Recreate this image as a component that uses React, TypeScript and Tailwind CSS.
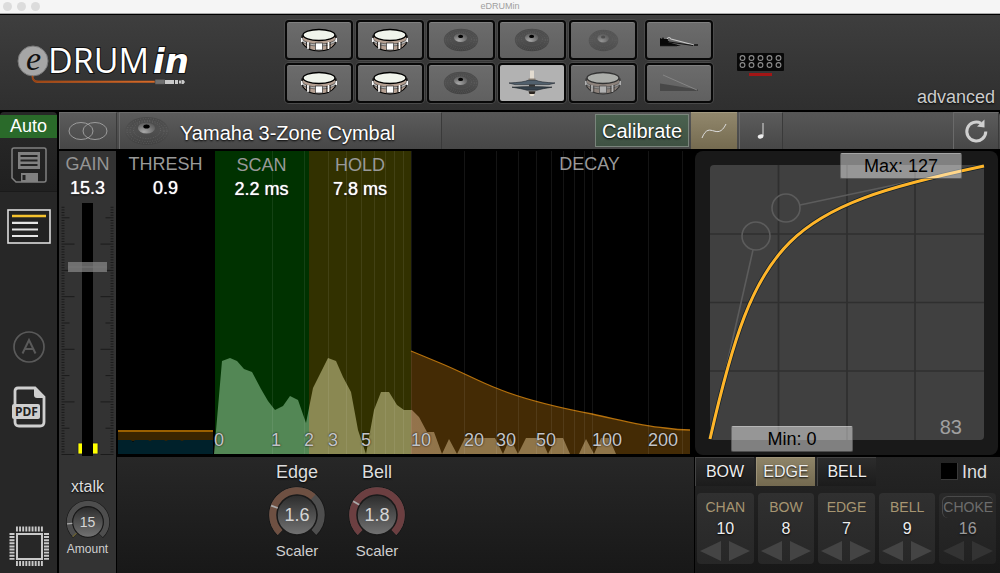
import React, { useId, useState } from "react";

const glow = "[text-shadow:0_1px_2px_#000]";
const valueText = "text-lg leading-6 text-white [text-shadow:0_0_1px_#fff,0_1px_2px_#000]";

function Snare({ dim = false }: { dim?: boolean }) {
  return (
    <svg viewBox="0 0 38 24" className={dim ? "h-6 w-[38px] opacity-50" : "h-6 w-[38px]"} aria-hidden="true">
      <path d="M2 8 L3 16 Q8 23 19 23 Q30 23 35 16 L36 8Z" fill="#b5a092" stroke="#000" strokeWidth="1.2" />
      <path d="M1.5 10.500Q6 16 19 16Q32 16 36.500 10.500L36.500 13Q32 18 19 18Q6 18 1.500 13Z" fill="#bbb" stroke="#222" strokeWidth=".5" />
      <ellipse cx="19" cy="7" rx="16" ry="5.5" fill="#f0f4ec" stroke="#000" strokeWidth="1.4" />
      <rect x="15.500" y="15" width="7" height="7" fill="#fff" stroke="#333" strokeWidth=".7" />
      <path d="M8 14v7M28.500 14v7M1.800 10v4M36.200 10v4" stroke="#fff" strokeWidth="1.500" />
      <path d="M6.500 14v6M9.800 15v6M26.800 15v6M30.200 14v6" stroke="#111" strokeWidth=".8" />
    </svg>
  );
}

function Cymbal({ size = "md", hole = true }: { size?: "sm" | "md" | "lg"; hole?: boolean }) {
  const id = useId();
  const cls =
    size === "lg" ? "h-[30px] w-[46px]" : size === "sm" ? "h-[23px] w-[31px] opacity-70" : "h-6 w-[36px]";
  return (
    <svg viewBox="0 0 46 30" preserveAspectRatio="none" className={cls} aria-hidden="true">
      <defs>
        <linearGradient id={id} x1="0" y1="0" x2="0" y2="1">
          <stop offset="0" stopColor="#4a4a4a" />
          <stop offset=".5" stopColor="#505050" />
          <stop offset="1" stopColor="#424242" />
        </linearGradient>
        <radialGradient id={id + "b"} cx=".35" cy=".85" r=".9">
          <stop offset="0" stopColor="#a8a8a8" />
          <stop offset=".6" stopColor="#727272" />
          <stop offset="1" stopColor="#555" />
        </radialGradient>
      </defs>
      <ellipse cx="23" cy="15" rx="22" ry="14" fill={`url(#${id})`} />
      <g fill="none" stroke="#bbb" strokeOpacity=".18" strokeDasharray="1 1.6">
        <ellipse cx="23" cy="15" rx="20" ry="12.500" />
        <ellipse cx="23" cy="15" rx="17" ry="10.500" />
        <ellipse cx="23" cy="14" rx="13.500" ry="8.500" />
      </g>
      <ellipse cx="22.500" cy="12" rx="8.500" ry="5.500" fill={`url(#${id}b)`} />
      <ellipse cx="22.500" cy="10.500" rx="3.200" ry="2" fill={hole ? "#000" : "#444"} />
    </svg>
  );
}

function HiHat() {
  return (
    <svg viewBox="0 0 48 28" className="h-7 w-12" aria-hidden="true">
      <path d="M22 1.500h4v9h-4z" fill="#e2dbd0" />
      <path d="M20.500 9.500h7v2h-7z" fill="#8a7f74" />
      <path d="M1 14Q16 13.300 20 11.300h8Q32 13.300 47 14L41 15.600H7Z" fill="#51606d" stroke="#1c242b" strokeWidth=".6" />
      <path d="M4 18.200Q14 17.600 24 17.600T44 18.200Q34 19.700 29 21.200H19Q14 19.700 4 18.200Z" fill="#36424c" stroke="#161c22" strokeWidth=".6" />
      <path d="M21 15.600h6v2h-6z" fill="#333" />
      <path d="M20.500 22.300h7l-1 2.700h-5z" fill="#2a241f" />
      <path d="M21.500 25h5l-1 2h-3z" fill="#e8dfd0" />
    </svg>
  );
}

function Pedal({ dim = false }: { dim?: boolean }) {
  return dim ? (
    <svg viewBox="0 0 40 18" className="h-[18px] w-10" aria-hidden="true">
      <path d="M1 9.500L39 15.500V17H1Z" fill="#484848" />
      <path d="M4 1L38 16" stroke="#888" strokeWidth=".9" />
    </svg>
  ) : (
    <svg viewBox="0 0 40 12" className="mt-1 h-3 w-10" aria-hidden="true">
      <path d="M1 2l2 1 1-2 1 2h4v3L22 10H1z" fill="#080808" />
      <path d="M1 9.500h17M33 9h6" stroke="#111" strokeWidth="1.500" />
      <path d="M8 3q2-3 4 0L35 9" fill="none" stroke="#c9c9c9" strokeWidth="1.200" />
      <path d="M8 4l2 2L34 9.500" fill="none" stroke="#111" />
    </svg>
  );
}

function Pad({ label, active, children }: { label: string; active?: boolean; children: React.ReactNode }) {
  return (
    <button
      type="button"
      aria-label={label}
      className={
        "flex h-10 w-[68px] items-center justify-center rounded border-2 border-[#080808] shadow-[0_0_0_1px_#4a4a4a] " +
        (active ? "bg-[#b2b2b2]" : "bg-linear-to-b from-[#6c6c6c] to-[#606060] inset-shadow-[0_1px_0_#808080]")
      }
    >
      {children}
    </button>
  );
}

function Logo() {
  return (
    <svg viewBox="0 -14 190 60" className="h-[60px] w-[190px]" role="img" aria-label="eDRUMin">
      <defs>
        <linearGradient id="cable" x1="0" x2="1" y1="0" y2="0">
          <stop offset="0" stopColor="#8f3a0c" />
          <stop offset="1" stopColor="#e27430" />
        </linearGradient>
      </defs>
      <circle cx="16" cy="16" r="15" fill="#a6a6a6" stroke="#777" />
      <text x="9" y="25" fontSize="34" fontStyle="italic" fill="#111" fontFamily="'Liberation Serif', serif">e</text>
      <text x="31" y="28" fontSize="34" fill="#fff" stroke="#111" strokeWidth="2" paintOrder="stroke" fontFamily="'Open Sans', sans-serif">DRUM</text>
      <text x="136" y="28" fontSize="34" fontWeight="700" fontStyle="italic" fill="#fff" stroke="#111" strokeWidth="2" paintOrder="stroke" fontFamily="'DejaVu Sans', sans-serif">in</text>
      <path d="M16 31Q16 36 21 36H138V37.500H20Q15 37 15 31Z" fill="url(#cable)" stroke="#c05a20" strokeWidth=".6" />
      <path d="M138 34.300h10v5h-10z" fill="#707070" stroke="#333" strokeWidth=".5" />
      <path d="M148 35h9v4h-9zM158 35h3v4h-3zM162 35.500h2v3h-2zM164.500 35h2l1.500 2-1.500 2h-2z" fill="#c9c9c9" />
    </svg>
  );
}

function arc(r: number, from: number, to: number) {
  const p = (a: number) => {
    const t = (a * Math.PI) / 180;
    return `${(30 + r * Math.sin(t)).toFixed(2)} ${(30 - r * Math.cos(t)).toFixed(2)}`;
  };
  return `M${p(from)}A${r} ${r} 0 ${to - from > 180 ? 1 : 0} 1 ${p(to)}`;
}

type KnobProps = { id: string; label: string; shown: string; color: string; from: number; to: number; mark: number; small?: boolean };

function Knob({ id, label, shown, color, from, to, mark, small }: KnobProps) {
  const rad = (mark * Math.PI) / 180;
  return (
    <div className="flex flex-col items-center">
      <div className={small ? "relative h-[46px] w-[46px]" : "relative h-[60px] w-[60px]"}>
        <svg viewBox="0 0 60 60" className="block h-full w-full" aria-hidden="true">
          <defs>
            <linearGradient id={id + "-face"} x1="0" x2="0" y1="0" y2="1">
              <stop offset="0" stopColor="#2c2c2c" />
              <stop offset="1" stopColor="#737373" />
            </linearGradient>
          </defs>
          <path d={arc(24, -137, 137)} fill="none" stroke="#161616" strokeWidth="9" />
          <path d={arc(24, -136, 136)} fill="none" stroke="#4e4e4e" strokeWidth="7.500" />
          <path d={arc(24, from, to)} fill="none" stroke={color} strokeWidth="7.500" />
          <circle cx="30" cy="30" r="20" fill={`url(#${id}-face)`} stroke="#1a1a1a" strokeWidth="1.500" />
          <line
            x1={30 + 20.5 * Math.sin(rad)} y1={30 - 20.5 * Math.cos(rad)}
            x2={30 + 27.5 * Math.sin(rad)} y2={30 - 27.5 * Math.cos(rad)}
            stroke="#aaa" strokeWidth="1.800"
          />
        </svg>
        <span className={"pointer-events-none absolute inset-0 flex items-center justify-center text-[#d6d6d6] " + (small ? "text-sm" : "text-lg")}>
          {shown}
        </span>
        <input id={id} type="range" min="0" max="20" step="0.1" defaultValue={shown} className="absolute inset-0 h-full w-full cursor-pointer opacity-0" />
      </div>
      <label htmlFor={id} className={small ? "-mt-1 text-xs leading-4 text-[#cfcfcf]" : "-mt-1 text-[15px] leading-5 text-[#cfcfcf]"}>
        {label}
      </label>
    </div>
  );
}

function Sidebar() {
  return (
    <nav className="flex w-[57px] shrink-0 flex-col items-center rounded-t bg-[#272727] pt-[3px]" aria-label="Tools">
      <button type="button" className="h-[23px] w-full bg-[#2a6a2a] text-lg leading-[23px] text-white">Auto</button>
      <button type="button" aria-label="Save" className="flex h-[54px] w-full items-center justify-center border-b border-[#1a1a1a] bg-linear-to-b from-[#262626] to-[#202020]">
        <svg viewBox="0 0 36 36" className="h-9 w-9" aria-hidden="true">
          <path d="M3 1H33Q35 1 35 3V33Q35 35 33 35H5L1 31V3Q1 1 3 1Z" fill="none" stroke="#808080" strokeWidth="1.500" />
          <path d="M7 5h22v17H7z" fill="#808080" />
          <path d="M9.500 9h17M9.500 13.500h17M9.500 18h17" stroke="#222" strokeWidth="2" />
          <path d="M10 26h17v9H10z" fill="#808080" />
          <path d="M11.500 28h3v5h-3z" fill="#222" />
        </svg>
      </button>
      <button type="button" aria-label="Parameters" className="mt-[17px]">
        <svg viewBox="0 0 44 35" className="block h-[35px] w-11" aria-hidden="true">
          <rect x="1" y="1" width="42" height="33" fill="#222" stroke="#ddd" strokeWidth="1.600" />
          <path d="M5 7h34" stroke="#f5c22e" strokeWidth="2.500" />
          <path d="M5 13.800h26M5 20.500h26M5 27h26" stroke="#e4e4e4" strokeWidth="2.200" />
        </svg>
      </button>
      <button type="button" aria-label="About" className="mt-[86px]">
        <svg viewBox="0 0 34 34" className="block h-[34px] w-[34px]" aria-hidden="true" fill="none" stroke="#5a5a5a">
          <circle cx="17" cy="17" r="15" strokeWidth="1.700" />
          <path d="M10.500 23.500L17 10l6.500 13.500M13 19h8" strokeWidth="2" />
        </svg>
      </button>
      <button type="button" aria-label="Open manual" className="mt-[22px]">
        <svg viewBox="0 0 34 42" className="block h-[42px] w-[34px]" aria-hidden="true">
          <path d="M3 20V5Q3 2 6 2H23L32 11V36Q32 40 28 40H7Q3 40 3 36V31" fill="none" stroke="#cfcfcf" strokeWidth="2.800" />
          <path d="M22 2v7q0 3 3 3h7z" fill="#cfcfcf" />
          <rect x="0" y="18" width="28" height="15" rx="2" fill="#cfcfcf" />
          <text x="3" y="30" fontSize="12" fontWeight="700" fill="#222" fontFamily="'Noto Sans', sans-serif">PDF</text>
        </svg>
      </button>
      <button type="button" aria-label="Firmware" className="mt-auto mb-1.5">
        <svg viewBox="0 0 42 42" className="block h-[42px] w-[42px]" aria-hidden="true" fill="none" stroke="#c9c9c9">
          <rect x="9" y="9" width="25" height="25" strokeWidth="2" />
          <path d="M8 4H35M8 38.500H35" strokeWidth="5" strokeDasharray="1.900 1.220" />
          <path d="M4 8V35M38.500 8V35" strokeWidth="5" strokeDasharray="1.900 1.220" />
        </svg>
      </button>
    </nav>
  );
}

const barBtn =
  "flex items-center justify-center border-t border-l border-t-[#6c6c6c] border-l-[#6a6a6a] border-r border-r-[#3a3a3a] bg-linear-to-b from-[#5c5c5c] to-[#474747] ";

function Toolbar() {
  return (
    <div className="flex h-[37px] shrink-0 items-stretch rounded-t bg-linear-to-b from-[#575757] to-[#474747]">
      <button type="button" aria-label="Link inputs" className={barBtn + "w-[58px]"}>
        <svg viewBox="0 0 40 20" className="h-5 w-10" fill="none" stroke="#9c9c9c" aria-hidden="true">
          <ellipse cx="13" cy="10" rx="12" ry="8.500" />
          <ellipse cx="27" cy="10" rx="12" ry="8.500" />
        </svg>
      </button>
      <button type="button" className={barBtn + "ml-0.5 w-[323px] justify-start! pl-1 text-xl text-white " + glow}>
        <Cymbal size="lg" />
        <span className="pt-1 pl-2.5 whitespace-nowrap">Yamaha 3-Zone Cymbal</span>
      </button>
      <button type="button" className={"my-0.5 ml-auto w-[94px] border border-[#7a857c] bg-linear-to-b from-[#4b6250] to-[#3f5243] text-xl leading-none text-white " + glow}>
        Calibrate
      </button>
      <button type="button" aria-label="Velocity curve" className="ml-0.5 flex w-[46px] items-center justify-center border-t border-[#a39a80] bg-linear-to-b from-[#91876c] to-[#756b50]">
        <svg viewBox="0 0 28 18" className="h-[18px] w-7" fill="none" stroke="#ddd" aria-hidden="true">
          <path d="M2 16C6 6 10 8 14 9C20 11 23 8 26 2" />
        </svg>
      </button>
      <button type="button" aria-label="Notes" className={barBtn + "ml-0.5 w-[44px]"}>
        <svg viewBox="0 0 10 18" className="h-[18px] w-2.5" aria-hidden="true">
          <path d="M7 1v13" stroke="#ddd" />
          <ellipse cx="4.600" cy="14.500" rx="2.900" ry="2" fill="#eee" transform="rotate(-15 4.600 14.500)" />
        </svg>
      </button>
      <button type="button" aria-label="Reset" className={barBtn + "mr-px ml-[170px] w-[46px]"}>
        <svg viewBox="0 0 26 26" className="h-[26px] w-[26px]" aria-hidden="true">
          <path d="M18 5.200A9.500 9.500 0 1 0 22.800 13.500" fill="none" stroke="#d0d0d0" strokeWidth="3" />
          <path d="M14 8.500L21.500 9.500V1.500Z" fill="#d0d0d0" />
        </svg>
      </button>
    </div>
  );
}

function GainStrip() {
  const ticks: { y: number; len: number }[] = [];
  for (let i = 0; i <= 94; i++) {
    ticks.push({ y: 251.5 - i * 2.63, len: i % 20 === 0 ? 13 : i % 10 === 0 ? 8 : 3 });
  }
  return (
    <section className="flex w-[57px] shrink-0 flex-col items-center bg-[#333] text-center">
      <label htmlFor="gain" className="pt-px text-lg leading-6 text-[#949494]">GAIN</label>
      <output htmlFor="gain" className={valueText}>15.3</output>
      <div className="relative mt-[3px] min-h-[240px] w-full flex-1">
        <svg viewBox="0 0 57 253" preserveAspectRatio="none" className="absolute inset-0 h-full w-full" aria-hidden="true">
          {ticks.map((t) => (
            <path key={t.y} d={`M2.500 ${t.y}h${t.len}M54.500 ${t.y}h-${t.len}`} stroke="#1b1b1b" />
          ))}
          <rect x="19" y="240" width="20" height="11" fill="#ff0" stroke="#223" strokeWidth=".8" />
          <rect x="23" y="0" width="11" height="253" fill="#000" />
          <rect x="9" y="59" width="39" height="10" fill="#888" fillOpacity=".72" />
          <path d="M9 64h39" stroke="#777" />
        </svg>
        <input id="gain" type="range" min="0" max="24" step="0.1" defaultValue="15.3" className="absolute inset-0 h-full w-full opacity-0 [writing-mode:vertical-lr] [direction:rtl]" />
      </div>
      <h2 className={"mt-[19px] text-base leading-6 text-[#ddd] " + glow}>xtalk</h2>
      <Knob id="xtalk-amount" label="Amount" shown="15" color="#6a6030" from={-136} to={-132} mark={-95} small />
      <div className="h-4" />
    </section>
  );
}

const gridX = [272, 304, 328, 346, 361, 374, 385, 394, 403, 411, 464, 496, 518, 536, 551, 563, 574, 584, 592, 648, 682];

const chartLeft = 117;
const chartWidth = 573;

const axis = [
  { t: "0", x: 214 },
  { t: "1", x: 271 },
  { t: "2", x: 304 },
  { t: "3", x: 328 },
  { t: "5", x: 361 },
  { t: "10", x: 411 },
  { t: "20", x: 464 },
  { t: "30", x: 496 },
  { t: "50", x: 536 },
  { t: "100", x: 592 },
  { t: "200", x: 648 },
];

const wave =
  "214,454 222,361 230,358 237,361 244,369 252,372 261,389 268,401 275,410 283,406 290,396 298,400 306,423 313,388 321,372 328,358 336,361 343,377 351,392 358,430 366,454 374,410 381,392 389,392 397,405 404,410 412,410 419,417 427,432 434,432 442,454 449,439 457,454 465,438 495,438 503,454 510,438 518,454 526,438 541,438 548,454 556,438 563,438 570,454 579,454 586,439 594,454 601,438 609,438 616,454";

function EnvelopeChart() {
  const head = "text-lg leading-6 text-[#999]";
  return (
    <section className="relative min-h-[300px] flex-1 bg-black" aria-label="Trigger envelope">
      <svg viewBox="117 151 573 304" preserveAspectRatio="none" className="absolute inset-0 h-full w-full" aria-hidden="true">
        <defs>
          <linearGradient id="wave" gradientUnits="userSpaceOnUse" x1="214" x2="690" y1="0" y2="0">
            <stop offset=".2" stopColor="#538755" />
            <stop offset=".2" stopColor="#8a8852" />
            <stop offset=".414" stopColor="#8a8852" />
            <stop offset=".414" stopColor="#94734c" />
            <stop offset=".5" stopColor="#8f7549" />
          </linearGradient>
        </defs>
        <rect x="215" y="151" width="94" height="303" fill="#003200" />
        <rect x="309" y="151" width="102" height="303" fill="#323100" />
        <path d="M411 351L440 363C464 373 480 382 496 388C520 398 550 406 592 414C620 420 640 426 665 428Q678 430 690 430V454H411Z" fill="#442b05" />
        <path d="M411 351L440 363C464 373 480 382 496 388C520 398 550 406 592 414C620 420 640 426 665 428Q678 430 690 430" fill="none" stroke="#b4700c" strokeWidth="1.300" />
        <rect x="118" y="431" width="95" height="10" fill="#3a2500" />
        <rect x="118" y="430" width="95" height="2" fill="#9a6000" />
        <path d="M118 440H131L133 442L135 440H148L150 441L152 440H164L166 441L168 440H180L182 441L184 440H213V454H118Z" fill="#00212b" />
        <polygon points={wave} fill="url(#wave)" />
        {gridX.map((x) => (
          <path key={x} d={`M${x}.5 151V454`} stroke="#fff" strokeOpacity=".08" />
        ))}
      </svg>
      <div className="relative grid grid-cols-[97fr_95fr_102fr_279fr] pt-px text-center">
        <div className="flex flex-col">
          <span className={head}>THRESH</span>
          <span className={valueText}>0.9</span>
        </div>
        <div className="flex flex-col pt-px">
          <span className={head}>SCAN</span>
          <span className={valueText}>2.2 ms</span>
        </div>
        <div className="flex flex-col pt-px">
          <span className={head}>HOLD</span>
          <span className={valueText}>7.8 ms</span>
        </div>
        <div className="flex flex-col pl-[78px]">
          <span className={head}>DECAY</span>
        </div>
      </div>
      {axis.map((a) => (
        <span
          key={a.t}
          className="absolute bottom-[3px] text-lg leading-6 text-[#c4c4c8] [text-shadow:0_0_2px_#000]"
          style={{ left: `${((a.x - chartLeft) / chartWidth) * 100}%` }}
        >
          {a.t}
        </span>
      ))}
    </section>
  );
}

function Scalers() {
  return (
    <section className="mt-0.5 -mr-1 flex h-[116px] shrink-0 gap-5 bg-linear-to-b from-[#272727] to-[#181818] pl-[150px]">
      <div className="flex flex-col items-center pt-0.5">
        <h2 className={"text-lg leading-[26px] text-[#ddd] " + glow}>Edge</h2>
        <Knob id="edge-scaler" label="Scaler" shown="1.6" color="#6e5042" from={-136} to={42} mark={-70} />
      </div>
      <div className="flex flex-col items-center pt-0.5">
        <h2 className={"text-lg leading-[26px] text-[#ddd] " + glow}>Bell</h2>
        <Knob id="bell-scaler" label="Scaler" shown="1.8" color="#6c3f41" from={-136} to={136} mark={-60} />
      </div>
    </section>
  );
}

function CurvePanel() {
  const tag = "absolute flex h-[26px] w-[122px] items-center justify-center rounded-xs border border-t-white/30 border-r-black/30 border-b-black/40 border-l-black/30 bg-white/45 text-lg leading-none text-black";
  return (
    <section className="relative mr-0.5 min-h-[300px] flex-1 rounded-lg bg-[#191919]" aria-label="Velocity curve">
      <svg viewBox="0 0 303 304" className="absolute inset-0 h-full w-full" aria-hidden="true">
        <rect x="15" y="14" width="274" height="275" rx="4" fill="#404040" />
        <path d="M83.500 14V289M152 14V289M220 14V289M15 83H289M15 151.500H289M15 220H289" stroke="#2f2f2f" strokeWidth="1.700" />
        <g fill="none" stroke="#5c5c5c" strokeWidth="1.600">
          <circle cx="61" cy="85" r="14" />
          <circle cx="91" cy="57" r="14" />
          <path d="M58 99L15 288M105 54L289 15" />
        </g>
        <path d="M15 288C61 85 91 57 289 15" fill="none" stroke="#10202c" strokeWidth="4.500" />
        <path d="M15 288C61 85 91 57 289 15" fill="none" stroke="#ffb52a" strokeWidth="3" />
      </svg>
      <span className={tag + " top-0.5 right-9"}>Max: 127</span>
      <span className={tag + " bottom-[3px] left-9"}>Min: 0</span>
      <output className="absolute right-9 bottom-4 text-xl leading-6 text-[#a0a0a0]">83</output>
    </section>
  );
}

function Stepper({ name, value, off }: { name: string; value: number; off?: boolean }) {
  return (
    <div className={"flex h-[71px] flex-col items-center rounded-sm bg-linear-to-b from-[#303030] to-[#272727] pt-[3px] " + (off ? "opacity-60" : "")}>
      <span className={off ? "rounded-md border-t border-l border-[#666] text-sm leading-[21px] text-[#a0a0a0]" : "pt-px text-sm leading-[21px] text-[#a79672]"}>
        {name}
      </span>
      <span className={"text-base leading-[22px] text-[#eee] " + glow}>{value}</span>
      <div className="mt-px flex gap-2">
        <button type="button" aria-label={name + " down"}>
          <svg viewBox="0 0 21 20" className="block h-5 w-[21px]" aria-hidden="true"><path d="M21 0V20L0 10Z" fill="#444" /></svg>
        </button>
        <button type="button" aria-label={name + " up"}>
          <svg viewBox="0 0 21 20" className="block h-5 w-[21px]" aria-hidden="true"><path d="M0 0V20L21 10Z" fill="#444" /></svg>
        </button>
      </div>
    </div>
  );
}

function ZonePanel() {
  const [zone, setZone] = useState("EDGE");
  return (
    <section className="mt-0.5 h-[116px] shrink-0 bg-linear-to-b from-[#252525] to-[#181818]">
      <div className="flex h-[29px] items-stretch gap-0.5">
        {["BOW", "EDGE", "BELL"].map((z) => (
          <button
            key={z}
            type="button"
            onClick={() => setZone(z)}
            className={
              "w-[59px] border-t border-l text-base leading-none text-[#eee] " + glow +
              (z === zone
                ? " border-[#9d9379] bg-linear-to-b from-[#8e8468] to-[#746a50]"
                : " border-[#444] bg-linear-to-b from-[#2c2c2c] to-[#1c1c1c]")
            }
          >
            {z}
          </button>
        ))}
        <label className="mr-[13px] ml-auto flex items-center gap-1 text-lg leading-none text-[#ddd]">
          <input type="checkbox" className="h-[17px] w-[17px] appearance-none border-r border-b border-[#3a3a3a] bg-black checked:bg-[#a79672]" />
          Ind
        </label>
      </div>
      <div className="mt-[7px] grid grid-cols-5 gap-1 pr-1 pl-0.5">
        <Stepper name="CHAN" value={10} />
        <Stepper name="BOW" value={8} />
        <Stepper name="EDGE" value={7} />
        <Stepper name="BELL" value={9} />
        <Stepper name="CHOKE" value={16} off />
      </div>
    </section>
  );
}

export default function App() {
  return (
    <div className="flex min-h-screen flex-col bg-black font-['Liberation_Sans',Arial,sans-serif]">
      <div className="relative flex h-[14px] shrink-0 items-center justify-center border-b border-[#aaa] bg-[#f5f5f5]">
        <div className="absolute left-[3px] flex gap-[5px]">
          <i className="h-[9px] w-[9px] rounded-full bg-[#dcdcdc]" />
          <i className="h-[9px] w-[9px] rounded-full bg-[#dcdcdc]" />
          <i className="h-[9px] w-[9px] rounded-full bg-[#dcdcdc]" />
        </div>
        <span className="text-[9px] leading-none text-[#a0a0a0]">eDRUMin</span>
      </div>

      <header className="flex h-24 shrink-0 items-stretch border-t border-black bg-linear-to-b from-[#3e3e3e] to-[#2f2f2f]">
        <div className="w-[285px] shrink-0 pt-4 pl-[17px]"><Logo /></div>
        <div className="flex gap-2 pt-[5px]">
          <div className="grid grid-cols-5 content-start gap-x-[3px] gap-y-[3px]">
            <Pad label="Input 1"><Snare /></Pad>
            <Pad label="Input 3"><Snare /></Pad>
            <Pad label="Input 5"><Cymbal /></Pad>
            <Pad label="Input 7"><Cymbal /></Pad>
            <Pad label="Input 9"><Cymbal size="sm" hole={false} /></Pad>
            <Pad label="Input 2"><Snare /></Pad>
            <Pad label="Input 4"><Snare /></Pad>
            <Pad label="Input 6"><Cymbal /></Pad>
            <Pad label="Input 8" active><HiHat /></Pad>
            <Pad label="Input 10"><Snare dim /></Pad>
          </div>
          <div className="flex flex-col gap-[3px]">
            <Pad label="Pedal 1"><Pedal /></Pad>
            <Pad label="Pedal 2"><Pedal dim /></Pad>
          </div>
        </div>
        <button type="button" aria-label="Device 1" className="ml-6 self-start pt-[38px]">
          <svg viewBox="0 0 47 24" className="block h-6 w-[47px]" aria-hidden="true">
            <rect width="47" height="18" rx="1" fill="#080808" />
            <g fill="none" stroke="#8e8e8e" strokeWidth="1.100">
              {[5.5, 14.5, 23.5, 32.5, 41.5].map((x) => (
                <g key={x}>
                  <circle cx={x} cy="5" r="2.400" />
                  <circle cx={x} cy="12" r="2.400" />
                </g>
              ))}
            </g>
            <path d="M12 21.500h23" stroke="#a31515" strokeWidth="3" />
          </svg>
        </button>
        <a href="#advanced" className={"mr-[5px] mb-px ml-auto self-end text-lg leading-6 text-[#ccc] " + glow}>advanced</a>
      </header>

      <div className="flex flex-1 items-stretch gap-0.5 pt-0.5">
        <Sidebar />
        <div className="flex min-w-0 flex-1 flex-col gap-0.5">
          <Toolbar />
          <main className="flex flex-1 items-stretch">
            <GainStrip />
            <div className="ml-px flex min-w-0 flex-1 flex-col">
              <EnvelopeChart />
              <Scalers />
            </div>
            <div className="flex w-[310px] shrink-0 flex-col pl-[5px]">
              <CurvePanel />
              <ZonePanel />
            </div>
          </main>
        </div>
      </div>
    </div>
  );
}
